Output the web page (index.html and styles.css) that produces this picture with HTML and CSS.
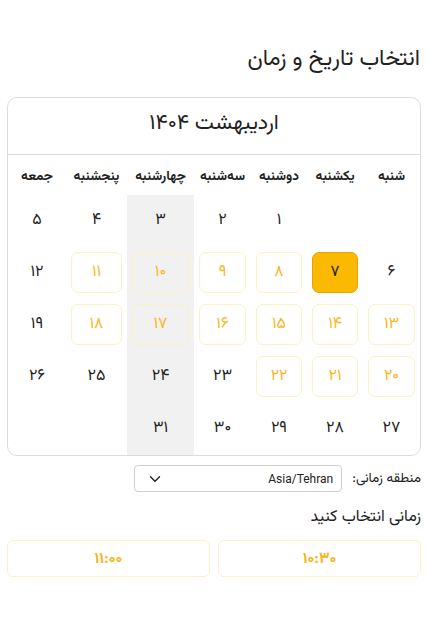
FILE: index.html
```html
<!DOCTYPE html>
<html lang="fa" dir="rtl">
<head>
<meta charset="utf-8">
<title>انتخاب تاریخ و زمان</title>
<link rel="stylesheet" href="styles.css">
</head>
<body>
<main class="page">
  <h1 class="title">انتخاب تاریخ و زمان</h1>
  <section class="card">
    <div class="month">اردیبهشت ۱۴۰۴</div>
    <div class="grid">
      <div class="wd">شنبه</div>
      <div class="wd">یکشنبه</div>
      <div class="wd">دوشنبه</div>
      <div class="wd">سه‌شنبه</div>
      <div class="wd">چهارشنبه</div>
      <div class="wd">پنجشنبه</div>
      <div class="wd">جمعه</div>

      <div class="day"></div>
      <div class="day"></div>
      <div class="day"><span class="num">۱</span></div>
      <div class="day"><span class="num">۲</span></div>
      <div class="day hl"><span class="num">۳</span></div>
      <div class="day"><span class="num">۴</span></div>
      <div class="day"><span class="num">۵</span></div>

      <div class="day"><span class="num">۶</span></div>
      <div class="day"><span class="num sel">۷</span></div>
      <div class="day"><span class="num av">۸</span></div>
      <div class="day"><span class="num av">۹</span></div>
      <div class="day hl"><span class="num av">۱۰</span></div>
      <div class="day"><span class="num av">۱۱</span></div>
      <div class="day"><span class="num">۱۲</span></div>

      <div class="day"><span class="num av">۱۳</span></div>
      <div class="day"><span class="num av">۱۴</span></div>
      <div class="day"><span class="num av">۱۵</span></div>
      <div class="day"><span class="num av">۱۶</span></div>
      <div class="day hl"><span class="num av">۱۷</span></div>
      <div class="day"><span class="num av">۱۸</span></div>
      <div class="day"><span class="num">۱۹</span></div>

      <div class="day"><span class="num av">۲۰</span></div>
      <div class="day"><span class="num av">۲۱</span></div>
      <div class="day"><span class="num av">۲۲</span></div>
      <div class="day"><span class="num">۲۳</span></div>
      <div class="day hl"><span class="num">۲۴</span></div>
      <div class="day"><span class="num">۲۵</span></div>
      <div class="day"><span class="num">۲۶</span></div>

      <div class="day"><span class="num">۲۷</span></div>
      <div class="day"><span class="num">۲۸</span></div>
      <div class="day"><span class="num">۲۹</span></div>
      <div class="day"><span class="num">۳۰</span></div>
      <div class="day hl"><span class="num">۳۱</span></div>
      <div class="day"></div>
      <div class="day"></div>
    </div>
  </section>

  <div class="tz">
    <span class="tz-label">منطقه زمانی:</span>
    <div class="select">
      <span class="select-text">Asia/Tehran</span>
      <svg class="chev" width="12" height="8" viewBox="0 0 12 8"><path d="M1.5 1.8 L6 6.2 L10.5 1.8" fill="none" stroke="#222" stroke-width="1.4" stroke-linecap="round" stroke-linejoin="round"/></svg>
    </div>
  </div>

  <h2 class="subtitle">زمانی انتخاب کنید</h2>
  <div class="times">
    <button class="time">۱۰:۳۰</button>
    <button class="time">۱۱:۰۰</button>
  </div>
</main>
</body>
</html>
```

FILE: styles.css
```css
* { box-sizing: border-box; }
html, body { margin: 0; padding: 0; background: #fff; }
body {
  font-family: "Vazirmatn", "Noto Sans Arabic", "DejaVu Sans", sans-serif;
  color: #1f1f1f;
}
.page {
  padding: 44px 7px 0 7px;
}
.title {
  margin: 0 0 21px 0;
  padding-right: 1px;
  font-size: 22.5px;
  line-height: 32px;
  font-weight: 400;
  color: #222;
}
.card {
  border: 1px solid #dcdcdc;
  border-radius: 10px;
  overflow: hidden;
}
.month {
  height: 57px;
  border-bottom: 1px solid #dcdcdc;
  display: flex;
  align-items: center;
  justify-content: center;
  font-size: 21.5px;
  padding-bottom: 5px;
  color: #222;
}
.grid {
  display: grid;
  grid-template-columns: 57px 56px 56px 57px 67px 61px 58px;
  grid-auto-rows: 52px;
  grid-template-rows: 40px;
}
.wd {
  display: flex;
  align-items: center;
  justify-content: center;
  font-size: 13.5px;
  font-weight: 700;
  color: #222;
  padding-top: 2px;
}
.day {
  padding: 5px 5px 6px 5px;
  display: flex;
}
.day.hl { background: #f1f1f1; }
.num {
  flex: 1;
  display: flex;
  align-items: center;
  justify-content: center;
  font-size: 16px;
  border-radius: 7px;
  border: 1px solid transparent;
  color: #222;
}
.num.av {
  border-color: #fdefc6;
  color: #fab61e;
}
.num.sel {
  background: #fbb900;
  border-color: #e3a600;
  color: #222;
}
.tz {
  display: flex;
  align-items: center;
  gap: 10px;
  margin-top: 9px;
}
.tz-label {
  font-size: 13.5px;
  color: #222;
}
.select {
  width: 208px;
  height: 27px;
  border: 1px solid #cfcfcf;
  border-radius: 4px;
  display: flex;
  align-items: center;
  justify-content: space-between;
  padding: 0 8px 0 14px;
}
.select-text {
  font-family: Roboto, "Liberation Sans", sans-serif;
  font-size: 12px;
  color: #222;
}
.chev { display: block; }
.subtitle {
  margin: 15px 0 11px 0;
  font-size: 16px;
  line-height: 22px;
  font-weight: 400;
  color: #222;
}
.times {
  display: grid;
  grid-template-columns: 1fr 1fr;
  gap: 8px;
}
.time {
  height: 37px;
  border: 1px solid #fdefc6;
  border-radius: 6px;
  background: #fff;
  font-family: inherit;
  font-size: 15.5px;
  font-weight: 700;
  color: #f8b415;
  padding: 0;
}
```
